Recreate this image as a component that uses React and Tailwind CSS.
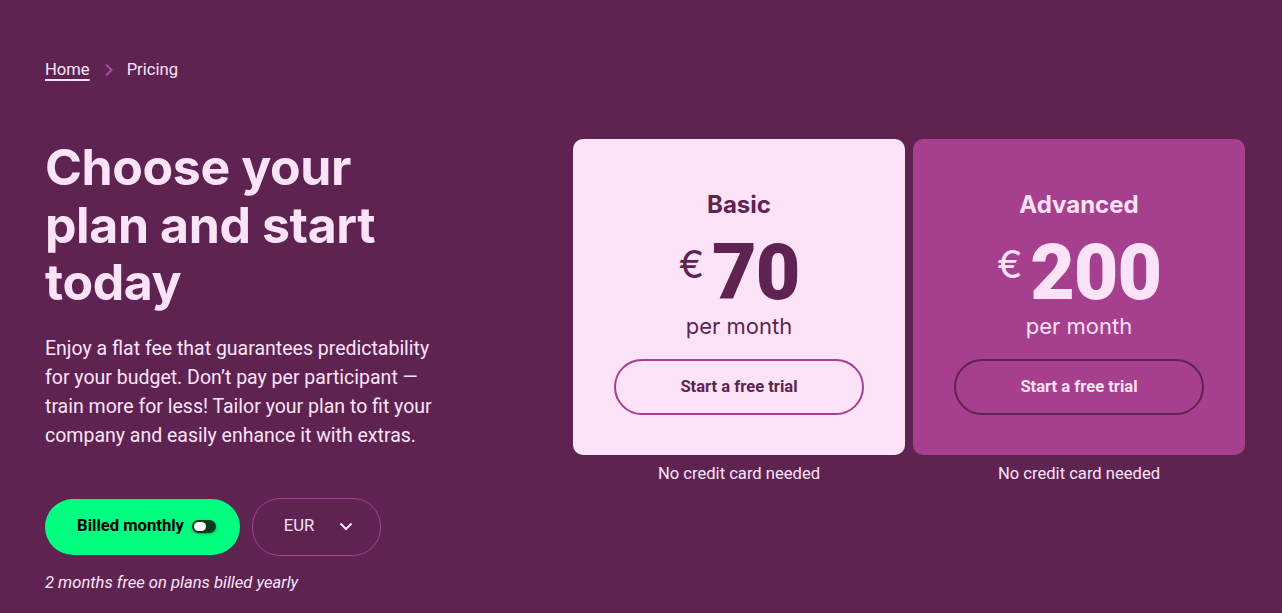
import React from "react";

function Card({ name, price, light }) {
  const text = light ? "text-[#5e2351]" : "text-[#fde3f8]";
  return (
    <div className="flex flex-col items-center">
      <div
        className={`w-[332px] h-[316px] rounded-[10px] flex flex-col items-center pt-[50px] ${
          light ? "bg-[#fde3f8]" : "bg-[#a63f8e]"
        }`}
      >
        <div className={`font-['Inter'] font-bold text-[24px] leading-[32px] ${text}`}>{name}</div>
        <div className={`flex items-start mt-[14px] h-[77px] ${text}`}>
          <span className="font-['Inter'] text-[38px] leading-[40px] mr-[8px] mt-[9px]">€</span>
          <span className="font-['Roboto'] font-black text-[77px] leading-[77px] tracking-[-1px]">{price}</span>
        </div>
        <div className={`font-['Inter'] text-[22px] leading-[28px] ${text}`}>per month</div>
        <button
          className={`mt-[19px] w-[250px] h-[56px] rounded-full border-2 font-['Roboto'] font-bold text-[16.6px] ${
            light ? "border-[#a63f8e] text-[#5e2351]" : "border-[#5e2351] text-[#fde3f8]"
          }`}
        >
          Start a free trial
        </button>
      </div>
      <div className="mt-[9px] font-['Roboto'] text-[16.6px] leading-[20px] text-[#fde3f8]">No credit card needed</div>
    </div>
  );
}

export default function App() {
  return (
    <div className="w-[1282px] h-[613px] bg-[#5e2351] overflow-hidden font-['Roboto'] text-[#fde3f8]">
      <div className="pl-[45px] pr-[37px] pt-[60px]">
        <nav className="flex items-center text-[16.6px] leading-[20px]">
          <a className="underline decoration-[1.5px] underline-offset-[4px] text-[#fde3f8]">Home</a>
          <svg className="ml-[14px] mr-[13px]" width="10" height="14" viewBox="0 0 10 14" fill="none">
            <path d="M2 1.5 L7.5 7 L2 12.5" stroke="#b04a9b" strokeWidth="2" />
          </svg>
          <span>Pricing</span>
        </nav>
        <div className="flex justify-between mt-[59px]">
          <div className="w-[400px] pt-[0px]">
            <h1 className="font-['Inter'] font-bold text-[50px] leading-[57.5px] tracking-[-0.4px] text-[#fde3f8]">
              Choose your plan and start today
            </h1>
            <p className="mt-[22px] text-[19.5px] leading-[29px] w-[400px]">
              Enjoy a flat fee that guarantees predictability for your budget. Don’t pay per participant — train more for less! Tailor your plan to fit your company and easily enhance it with extras.
            </p>
            <div className="flex items-center gap-[12px] mt-[48px]">
              <button className="h-[56px] w-[195px] rounded-[28px] bg-[#00ff80] flex items-center justify-center gap-[8px] pl-[8px] text-black font-bold text-[16.6px]">
                <span>Billed monthly</span>
                <span className="w-[24px] h-[13px] rounded-full bg-[#0d3a1f] flex items-center pl-[2px] shadow-[0_1px_3px_rgba(0,0,0,0.35)]">
                  <span className="w-[12px] h-[9px] rounded-full bg-white"></span>
                </span>
              </button>
              <button className="h-[58px] w-[129px] rounded-[28px] border border-[#a63f8e] flex items-center justify-center gap-[25px] pl-[4px] text-[16.6px] text-[#fde3f8]">
                <span>EUR</span>
                <svg width="14" height="9" viewBox="0 0 14 9" fill="none">
                  <path d="M1.5 1.5 L7 7 L12.5 1.5" stroke="#fde3f8" strokeWidth="2" />
                </svg>
              </button>
            </div>
            <div className="mt-[17px] italic text-[16.6px] leading-[20px]">2 months free on plans billed yearly</div>
          </div>
          <div className="flex gap-[8px] mt-[0px]">
            <Card name="Basic" price="70" light />
            <Card name="Advanced" price="200" />
          </div>
        </div>
      </div>
    </div>
  );
}
